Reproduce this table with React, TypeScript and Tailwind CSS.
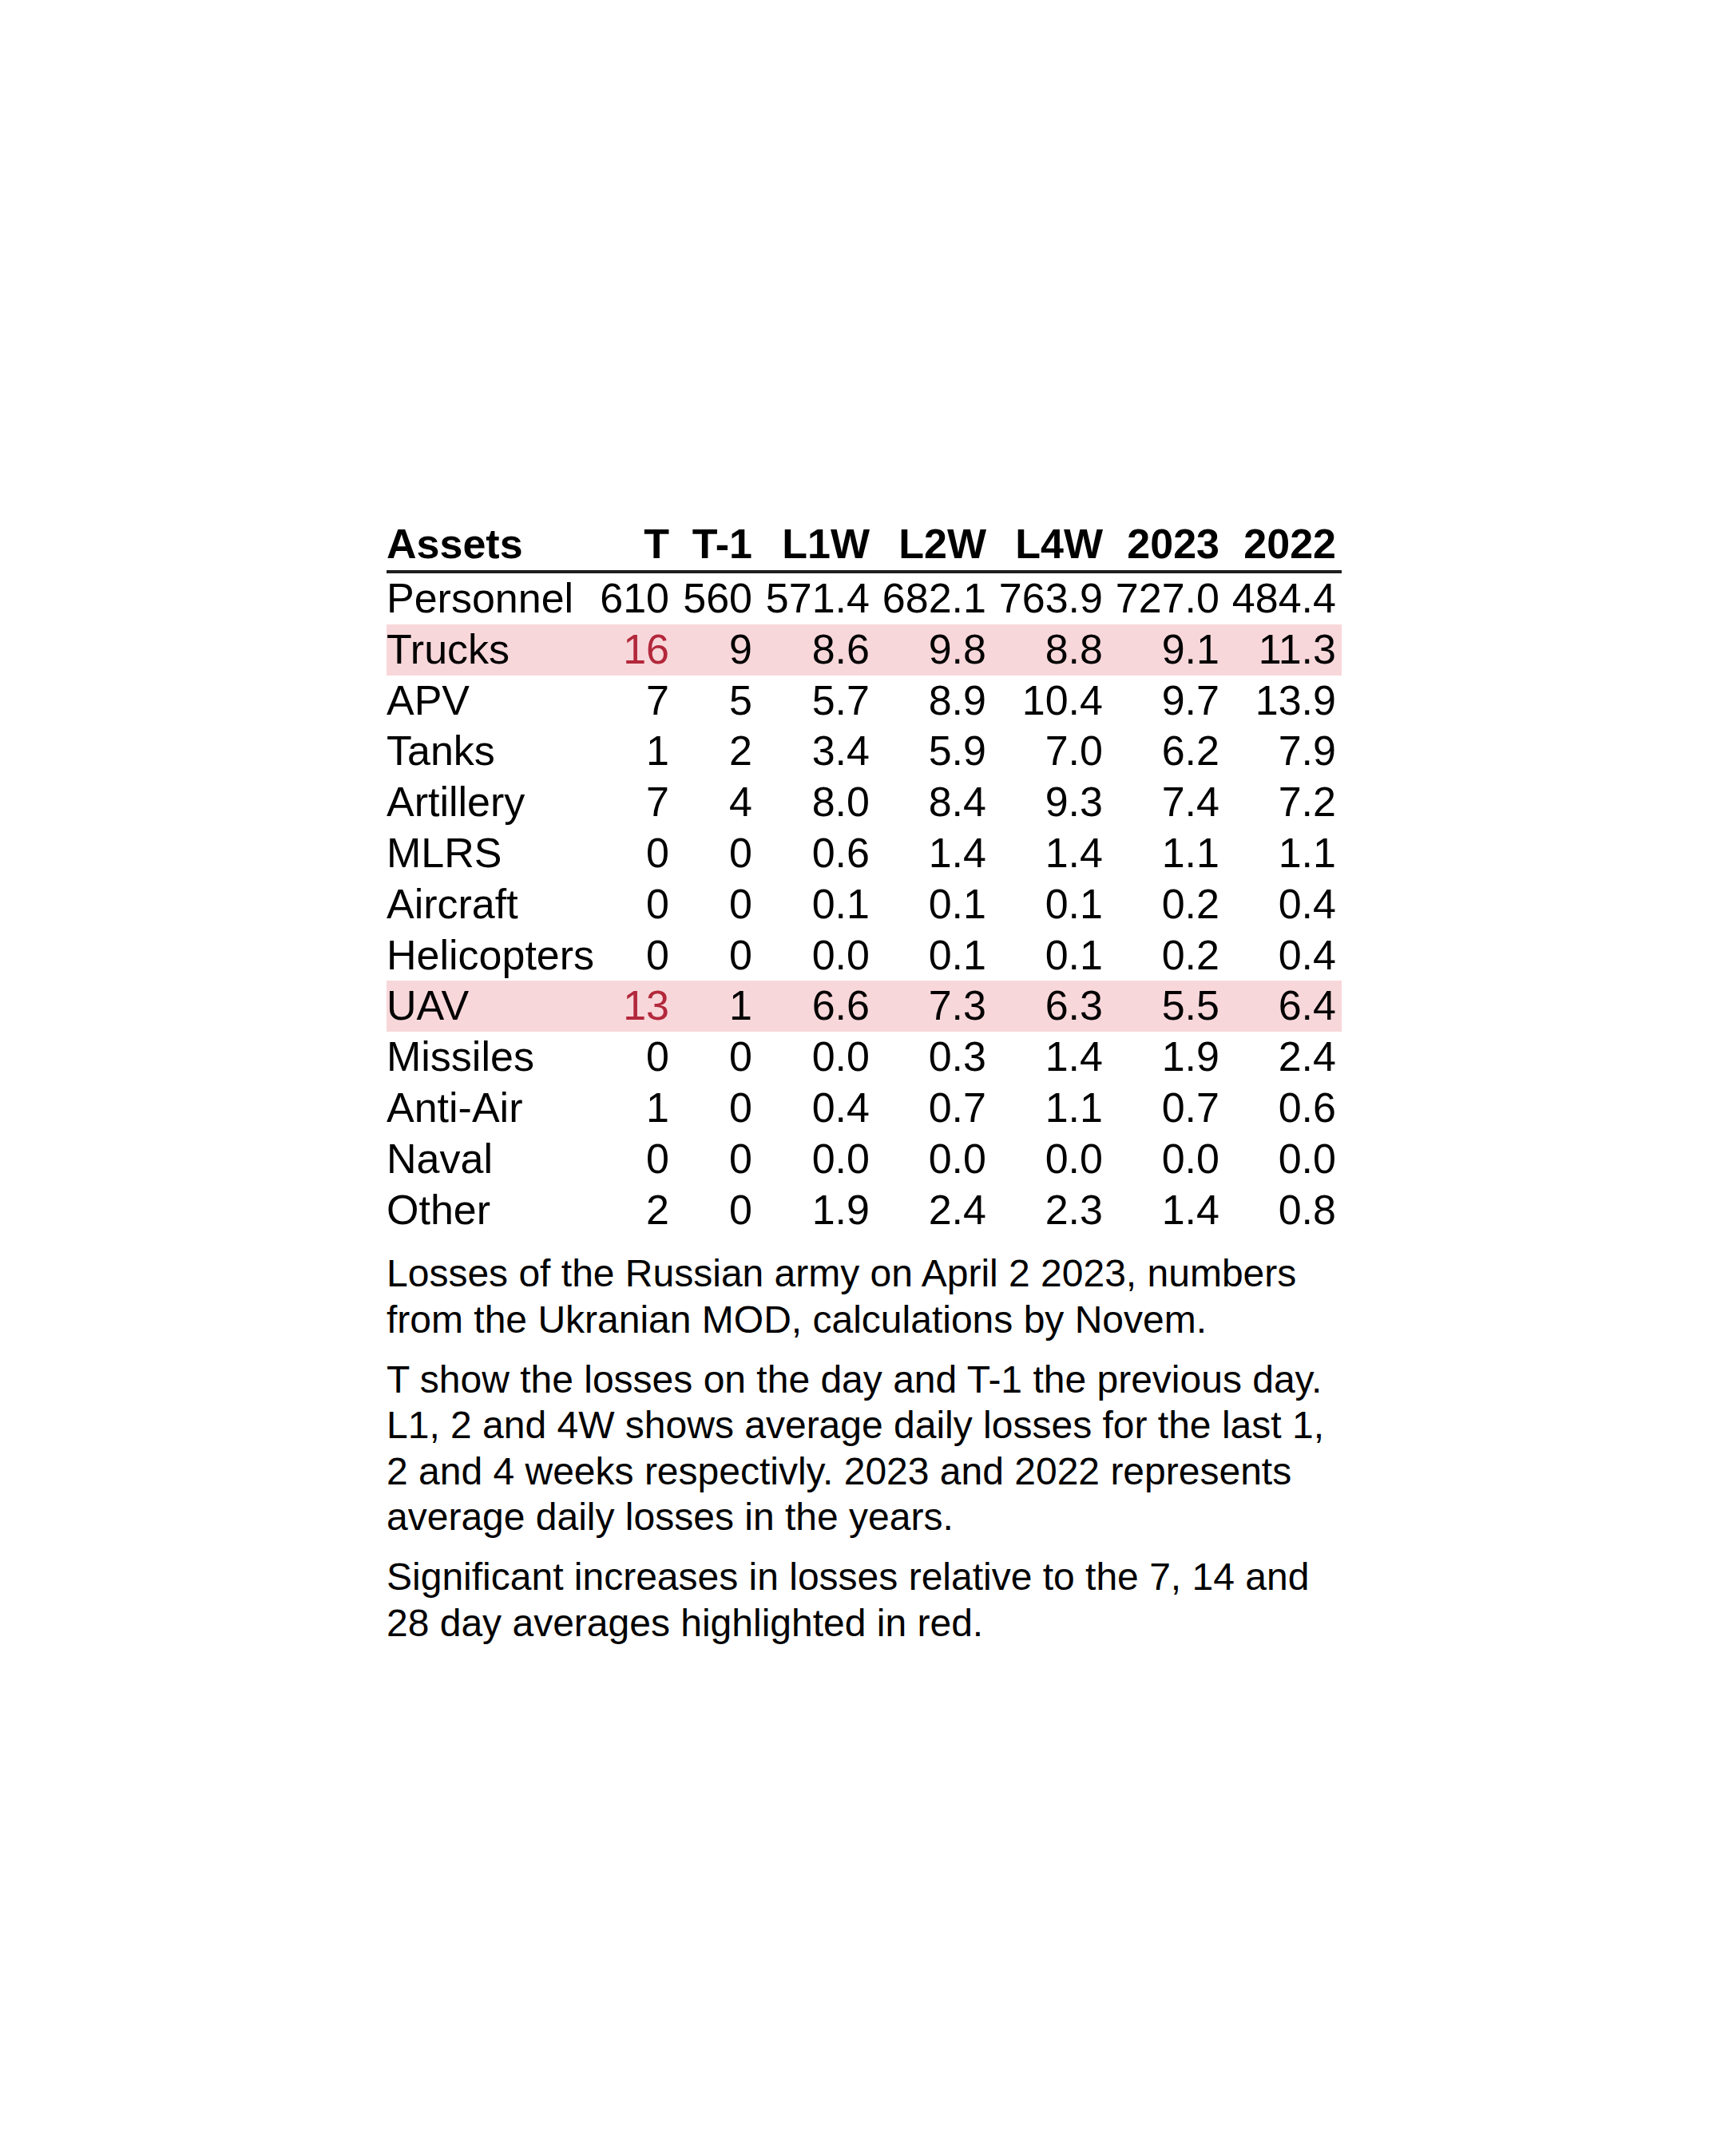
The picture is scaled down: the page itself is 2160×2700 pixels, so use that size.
const columns = ["T", "T-1", "L1W", "L2W", "L4W", "2023", "2022"];

type Row = {
  asset: string;
  values: string[];
  highlight?: boolean;
  hot?: number[];
};

const rows: Row[] = [
  { asset: "Personnel", values: ["610", "560", "571.4", "682.1", "763.9", "727.0", "484.4"] },
  { asset: "Trucks", values: ["16", "9", "8.6", "9.8", "8.8", "9.1", "11.3"], highlight: true, hot: [0] },
  { asset: "APV", values: ["7", "5", "5.7", "8.9", "10.4", "9.7", "13.9"] },
  { asset: "Tanks", values: ["1", "2", "3.4", "5.9", "7.0", "6.2", "7.9"] },
  { asset: "Artillery", values: ["7", "4", "8.0", "8.4", "9.3", "7.4", "7.2"] },
  { asset: "MLRS", values: ["0", "0", "0.6", "1.4", "1.4", "1.1", "1.1"] },
  { asset: "Aircraft", values: ["0", "0", "0.1", "0.1", "0.1", "0.2", "0.4"] },
  { asset: "Helicopters", values: ["0", "0", "0.0", "0.1", "0.1", "0.2", "0.4"] },
  { asset: "UAV", values: ["13", "1", "6.6", "7.3", "6.3", "5.5", "6.4"], highlight: true, hot: [0] },
  { asset: "Missiles", values: ["0", "0", "0.0", "0.3", "1.4", "1.9", "2.4"] },
  { asset: "Anti-Air", values: ["1", "0", "0.4", "0.7", "1.1", "0.7", "0.6"] },
  { asset: "Naval", values: ["0", "0", "0.0", "0.0", "0.0", "0.0", "0.0"] },
  { asset: "Other", values: ["2", "0", "1.9", "2.4", "2.3", "1.4", "0.8"] },
];

// first column hugs "Helicopters", numeric cells share the same padding
const grid = "grid grid-cols-[260px_101px_104px_147px_146px_146px_146px_146px]";

export default function App() {
  return (
    <div className="min-h-[2700px] bg-white pl-[484px] pt-[649px] font-['Liberation_Sans',Arial,sans-serif] text-black">
      <div className="w-[1196px]">
        <div className={`${grid} border-b-[4px] border-[#1f1f1f] pb-[1px] text-[52px] font-bold leading-[64px]`}>
          <div>Assets</div>
          {columns.map((col) => (
            <div className="pr-[7px] text-right" key={col}>
              {col}
            </div>
          ))}
        </div>
        {rows.map((row) => (
          <div
            className={`${grid} text-[52px] leading-[63.8px] ${row.highlight ? "bg-[#f8d7da]" : ""}`}
            key={row.asset}
          >
            <div className="whitespace-nowrap">{row.asset}</div>
            {row.values.map((value, i) => (
              <div
                className={`pr-[7px] text-right ${row.hot?.includes(i) ? "text-[#b3283b]" : ""}`}
                key={columns[i]}
              >
                {value}
              </div>
            ))}
          </div>
        ))}
        <div className="mt-[19px] space-y-[17px] text-[48px] leading-[57.6px]">
          <p>
            Losses of the Russian army on April 2 2023, numbers
            <br />
            from the Ukranian MOD, calculations by Novem.
          </p>
          <p>
            T show the losses on the day and T-1 the previous day.
            <br />
            L1, 2 and 4W shows average daily losses for the last 1,
            <br />
            2 and 4 weeks respectivly. 2023 and 2022 represents
            <br />
            average daily losses in the years.
          </p>
          <p>
            Significant increases in losses relative to the 7, 14 and
            <br />
            28 day averages highlighted in red.
          </p>
        </div>
      </div>
    </div>
  );
}
